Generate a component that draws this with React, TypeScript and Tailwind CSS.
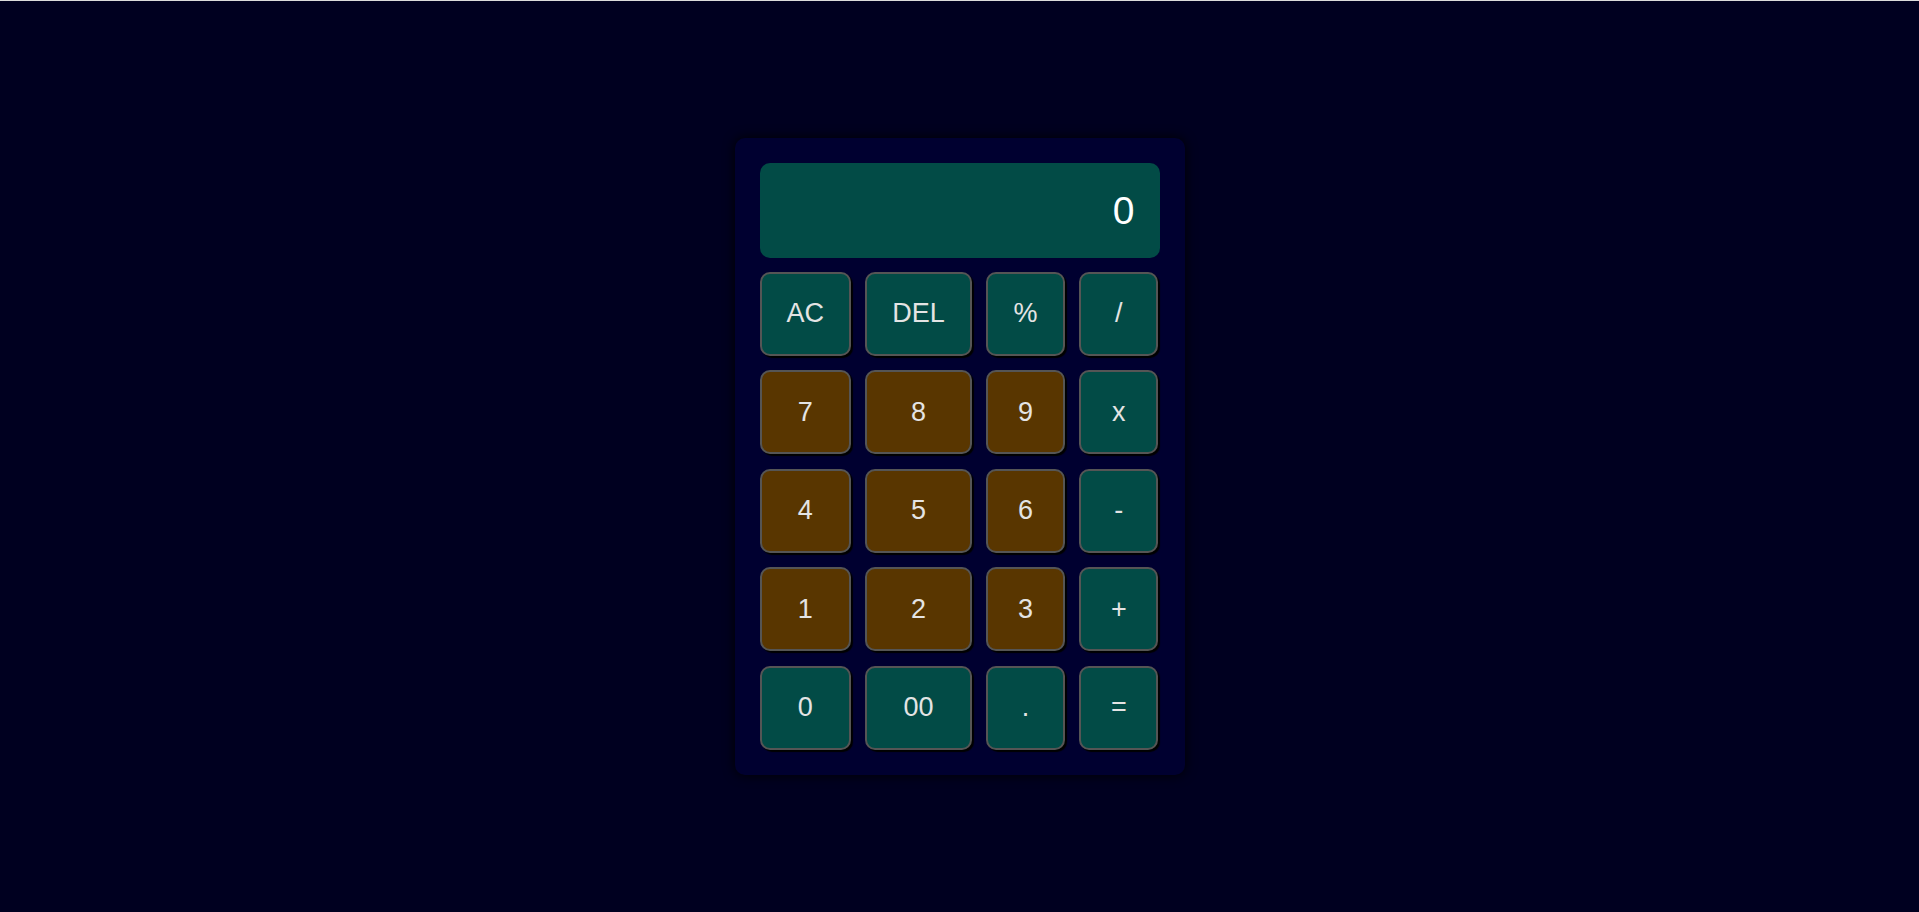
import React from "react";

type Key = { label: string; kind: "op" | "num" };

const rows: Key[][] = [
  [
    { label: "AC", kind: "op" },
    { label: "DEL", kind: "op" },
    { label: "%", kind: "op" },
    { label: "/", kind: "op" },
  ],
  [
    { label: "7", kind: "num" },
    { label: "8", kind: "num" },
    { label: "9", kind: "num" },
    { label: "x", kind: "op" },
  ],
  [
    { label: "4", kind: "num" },
    { label: "5", kind: "num" },
    { label: "6", kind: "num" },
    { label: "-", kind: "op" },
  ],
  [
    { label: "1", kind: "num" },
    { label: "2", kind: "num" },
    { label: "3", kind: "num" },
    { label: "+", kind: "op" },
  ],
  [
    { label: "0", kind: "op" },
    { label: "00", kind: "op" },
    { label: ".", kind: "op" },
    { label: "=", kind: "op" },
  ],
];

export default function App() {
  const keys = rows.flat();
  return (
    <div
      className="min-h-[912px] w-full bg-[#000020] flex flex-col"
      style={{ fontFamily: '"Liberation Sans", Arial, sans-serif' }}
    >
      <div className="h-px w-full bg-[#dcdcdc]" />
      <div className="flex-1 flex items-center justify-center">
        <div className="w-[450px] rounded-[10px] bg-[#000030] p-[25px] shadow-[0_0_12px_#000000] flex flex-col gap-[13.5px]">
          <div className="h-[95px] rounded-[10px] bg-[#024b46] flex items-center justify-end pr-[25px] text-[39px] text-white leading-none">
            0
          </div>
          <div className="grid grid-cols-[91.7px_106.7px_79.3px_79.3px] gap-x-[14px] gap-y-[14.5px] auto-rows-[84px]">
            {keys.map((k) => (
              <button
                key={k.label}
                className={
                  "rounded-[10px] border-2 border-[#555555] shadow-[2px_2px_1px_#000000] text-[27px] text-[#e4e4e4] flex items-center justify-center leading-none " +
                  (k.kind === "num" ? "bg-[#593600]" : "bg-[#024b46]")
                }
              >
                {k.label}
              </button>
            ))}
          </div>
        </div>
      </div>
    </div>
  );
}
